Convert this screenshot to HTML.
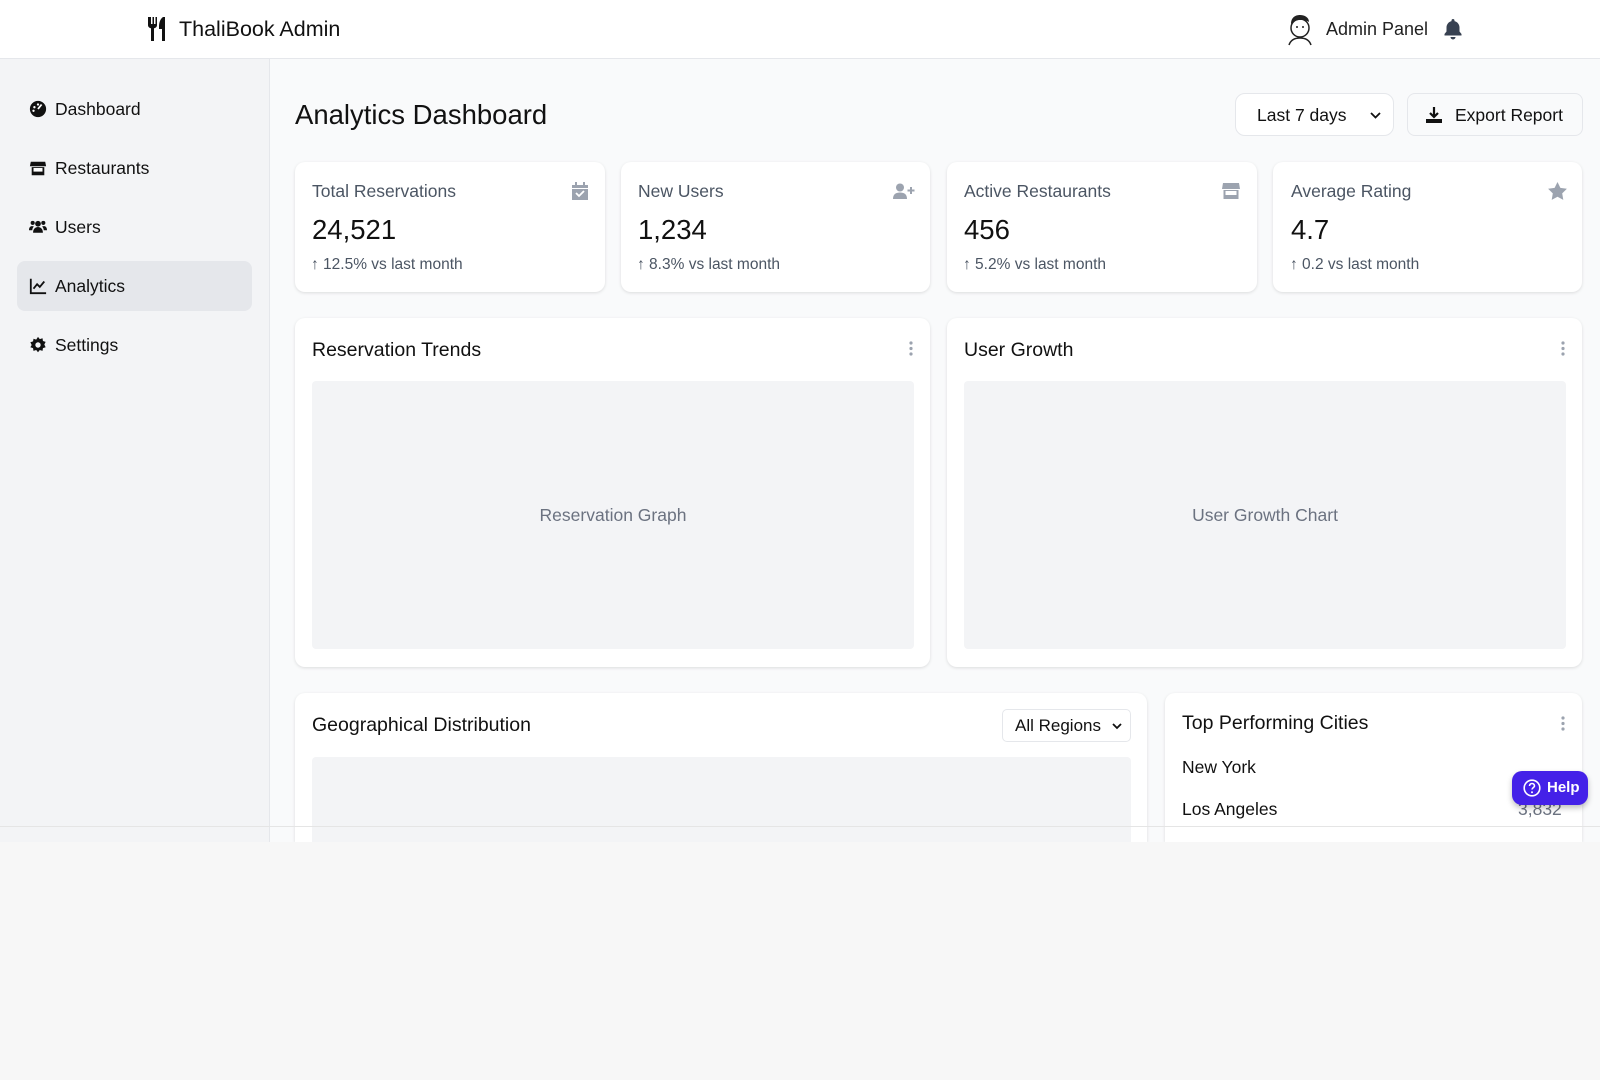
<!DOCTYPE html>
<html><head><meta charset="utf-8"><style>
*{box-sizing:border-box;margin:0;padding:0}
body{width:1600px;height:1080px;background:#f7f7f7;font-family:"Liberation Sans",sans-serif;color:#111;position:relative;overflow:hidden}
.a{position:absolute}
.hdr{left:0;top:0;width:1600px;height:59px;background:#fff;border-bottom:1px solid #e5e7eb}
.side{left:0;top:59px;width:270px;height:783px;background:#f3f4f6;border-right:1px solid #e5e7eb}
.main{left:270px;top:59px;width:1330px;height:783px;background:#f9fafb}
.nav{left:17px;width:235px;height:50px;display:flex;align-items:center;padding-left:12px;font-size:17.5px;color:#111;gap:8px;border-radius:8px}
.nav svg{width:18px;height:18px}
.card{background:#fff;border-radius:10px;box-shadow:0 1px 3px rgba(0,0,0,.12)}
.lbl{font-size:17.5px;color:#4b5563}
.val{font-size:27.5px;color:#111}
.sm{font-size:15.5px;color:#4b5563}
.ph{background:#f3f4f6;border-radius:4px;display:flex;align-items:center;justify-content:center;color:#6b7280;font-size:17.5px}
</style></head><body>
<div class="a hdr"></div>
<div class="a" style="left:147px;top:16px"><svg width="24" height="26" viewBox="0 0 24 26"><path d="M1 1v8c0 2 1.5 3 3 3.3V25h3V12.3C8.5 12 10 11 10 9V1H8.5v7H7V1H5.5v7H4V1z M16 1c-3 2-4 6-4 10v2h3v12h3V1z" fill="#111"/></svg></div>
<div class="a" style="left:179px;top:17px;font-size:21.5px">ThaliBook Admin</div>
<div class="a" style="left:1284px;top:12px"><svg width="32" height="34" viewBox="0 0 32 34"><circle cx="16" cy="16" r="9" fill="#fff" stroke="#222" stroke-width="1.5"/><path d="M7 12c0-7 5-9 9-9s9 2 9 7c-3-2-6-2-9-2-3 0-6 1-9 4z" fill="#222"/><path d="M5 33c2-6 7-7 11-7s9 1 11 7" fill="none" stroke="#222" stroke-width="1.5"/><circle cx="13" cy="15" r="1" fill="#222"/><circle cx="19" cy="15" r="1" fill="#222"/></svg></div>
<div class="a" style="left:1326px;top:19px;font-size:18px;color:#222">Admin Panel</div>
<div class="a" style="left:1443px;top:18px"><svg width="20" height="22" viewBox="0 0 20 22"><path d="M10 1c-1 0-1.5.7-1.5 1.5v.6C5.5 3.8 3.5 6.5 3.5 9.5v4L1.5 16v1.5h17V16l-2-2.5v-4c0-3-2-5.7-5-6.4v-.6C11.5 1.7 11 1 10 1zM7.5 19a2.5 2.5 0 005 0z" fill="#374151"/></svg></div>

<div class="a side"></div>
<div class="a main"></div>

<div class="a nav" style="top:84px"><svg viewBox="0 0 20 20"><circle cx="10" cy="10" r="9" fill="#111"/><path d="M10 10l4-5" stroke="#fff" stroke-width="2"/><circle cx="6" cy="8" r="1.3" fill="#fff"/><circle cx="10" cy="5" r="1.3" fill="#fff"/><circle cx="5" cy="12" r="1.3" fill="#fff"/></svg>Dashboard</div>
<div class="a nav" style="top:143px"><svg viewBox="0 0 20 20"><path d="M2 3h16l1 5H1zM3 9h14v9H3z" fill="#111"/><rect x="5" y="10" width="10" height="4" fill="#fff"/></svg>Restaurants</div>
<div class="a nav" style="top:202px"><svg viewBox="0 0 22 20"><circle cx="11" cy="6" r="3.5" fill="#111"/><circle cx="4.5" cy="5" r="2.5" fill="#111"/><circle cx="17.5" cy="5" r="2.5" fill="#111"/><path d="M5 17c0-5 3-7 6-7s6 2 6 7zM0 14c0-4 2-5 4-5 1 0 2 .5 2 .5-1.5 1-2 3-2 4.5zM22 14c0-4-2-5-4-5-1 0-2 .5-2 .5 1.5 1 2 3 2 4.5z" fill="#111"/></svg>Users</div>
<div class="a nav" style="top:261px;background:#e5e7eb"><svg viewBox="0 0 20 20"><path d="M2 2v16h17" fill="none" stroke="#111" stroke-width="2"/><path d="M5 13l4-5 3 3 5-6" fill="none" stroke="#111" stroke-width="2"/></svg>Analytics</div>
<div class="a nav" style="top:320px"><svg viewBox="0 0 20 20"><path d="M10 1l2 2.5 3-1 .5 3 3 1-1.5 3 1.5 3-3 1-.5 3-3-1-2 2.5-2-2.5-3 1-.5-3-3-1L3 10 1.5 7l3-1 .5-3 3 1z" fill="#111"/><circle cx="10" cy="10" r="3" fill="#f3f4f6"/></svg>Settings</div>

<div class="a" style="left:295px;top:99px;font-size:27.5px">Analytics Dashboard</div>
<div class="a card" style="left:1235px;top:93px;width:159px;height:43px;border:1px solid #e5e7eb;box-shadow:none;font-size:17.5px;padding:11px 0 0 21px">Last 7 days<svg class="a" style="right:12px;top:18px" width="11" height="8" viewBox="0 0 11 8"><path d="M1 1l4.5 4.5L10 1" fill="none" stroke="#111" stroke-width="1.8"/></svg></div>
<div class="a" style="left:1407px;top:93px;width:176px;height:43px;border:1px solid #e5e7eb;border-radius:8px;background:#f9fafb;font-size:17.5px;padding:11px 0 0 47px">Export Report<svg class="a" style="left:17px;top:12px" width="18" height="18" viewBox="0 0 18 18"><path d="M9 1v10M5 7l4 4 4-4" fill="none" stroke="#111" stroke-width="2.2"/><path d="M1 13h16v4H1z" fill="#111"/></svg></div>

<div class="a card" style="left:295px;top:162px;width:310px;height:130px"></div>
<div class="a card" style="left:621px;top:162px;width:309px;height:130px"></div>
<div class="a card" style="left:947px;top:162px;width:310px;height:130px"></div>
<div class="a card" style="left:1273px;top:162px;width:309px;height:130px"></div>

<div class="a lbl" style="left:312px;top:181px">Total Reservations</div>
<div class="a val" style="left:312px;top:214px">24,521</div>
<div class="a sm" style="left:311px;top:256px">↑ 12.5% vs last month</div>
<svg class="a" style="left:572px;top:182px" width="16" height="18" viewBox="0 0 16 18"><path d="M3 0h2v3H3zM11 0h2v3h-2zM0 3h16v15H0z" fill="#9ca3af"/><path d="M4 11l3 3 5-5" fill="none" stroke="#fff" stroke-width="1.8"/><rect y="6" width="16" height="1" fill="#fff"/></svg>

<div class="a lbl" style="left:638px;top:181px">New Users</div>
<div class="a val" style="left:638px;top:214px">1,234</div>
<div class="a sm" style="left:637px;top:256px">↑ 8.3% vs last month</div>
<svg class="a" style="left:893px;top:183px" width="22" height="16" viewBox="0 0 22 16"><circle cx="7" cy="4.5" r="4" fill="#9ca3af"/><path d="M0 16c0-5 3-6.5 7-6.5s7 1.5 7 6.5z" fill="#9ca3af"/><path d="M18 4v7M14.5 7.5h7" stroke="#9ca3af" stroke-width="2"/></svg>

<div class="a lbl" style="left:964px;top:181px">Active Restaurants</div>
<div class="a val" style="left:964px;top:214px">456</div>
<div class="a sm" style="left:963px;top:256px">↑ 5.2% vs last month</div>
<svg class="a" style="left:1222px;top:182px" width="18" height="18" viewBox="0 0 18 18"><path d="M1 1h16l1 6H0zM1.5 8h15v9h-15z" fill="#9ca3af"/><rect x="3.5" y="9" width="11" height="4" fill="#fff"/></svg>

<div class="a lbl" style="left:1291px;top:181px">Average Rating</div>
<div class="a val" style="left:1291px;top:214px">4.7</div>
<div class="a sm" style="left:1290px;top:256px">↑ 0.2 vs last month</div>
<svg class="a" style="left:1548px;top:182px" width="19" height="18" viewBox="0 0 24 23"><path d="M12 0l3.7 7.5 8.3 1.2-6 5.8 1.4 8.3L12 18.9 4.6 22.8 6 14.5 0 8.7l8.3-1.2z" fill="#9ca3af"/></svg>

<div class="a card" style="left:295px;top:318px;width:635px;height:349px"></div>
<div class="a card" style="left:947px;top:318px;width:635px;height:349px"></div>
<div class="a" style="left:312px;top:339px;font-size:19.5px">Reservation Trends</div>
<div class="a" style="left:964px;top:339px;font-size:19.5px">User Growth</div>
<svg class="a" style="left:909px;top:341px" width="4" height="15"><circle cx="2" cy="2" r="1.6" fill="#9ca3af"/><circle cx="2" cy="7.5" r="1.6" fill="#9ca3af"/><circle cx="2" cy="13" r="1.6" fill="#9ca3af"/></svg>
<svg class="a" style="left:1561px;top:341px" width="4" height="15"><circle cx="2" cy="2" r="1.6" fill="#9ca3af"/><circle cx="2" cy="7.5" r="1.6" fill="#9ca3af"/><circle cx="2" cy="13" r="1.6" fill="#9ca3af"/></svg>
<div class="a ph" style="left:312px;top:381px;width:602px;height:268px">Reservation Graph</div>
<div class="a ph" style="left:964px;top:381px;width:602px;height:268px">User Growth Chart</div>

<div class="a card" style="left:295px;top:693px;width:852px;height:149px;border-radius:10px 10px 0 0"></div>
<div class="a card" style="left:1165px;top:693px;width:417px;height:149px;border-radius:10px 10px 0 0"></div>
<div class="a" style="left:312px;top:714px;font-size:19.5px">Geographical Distribution</div>
<div class="a" style="left:1002px;top:709px;width:129px;height:33px;border:1px solid #e5e7eb;border-radius:5px;font-size:17px;padding:6px 0 0 12px">All Regions<svg class="a" style="right:8px;top:13px" width="10" height="7" viewBox="0 0 10 7"><path d="M1 1l4 4 4-4" fill="none" stroke="#111" stroke-width="1.8"/></svg></div>
<div class="a ph" style="left:312px;top:757px;width:819px;height:85px;border-radius:4px 4px 0 0"></div>
<div class="a" style="left:1182px;top:712px;font-size:19.5px">Top Performing Cities</div>
<svg class="a" style="left:1561px;top:716px" width="4" height="15"><circle cx="2" cy="2" r="1.6" fill="#9ca3af"/><circle cx="2" cy="7.5" r="1.6" fill="#9ca3af"/><circle cx="2" cy="13" r="1.6" fill="#9ca3af"/></svg>
<div class="a" style="left:1182px;top:757px;font-size:17.5px">New York</div>
<div class="a" style="left:1182px;top:799px;font-size:17.5px">Los Angeles</div>
<div class="a" style="left:1518px;top:799px;font-size:17.5px;color:#6b7280">3,832</div>
<div class="a" style="left:0;top:826px;width:1600px;height:1px;background:#e5e5e5"></div>
<div class="a" style="left:0;top:842px;width:1600px;height:238px;background:#f7f7f7"></div>
<div class="a" style="left:1512px;top:771px;width:76px;height:34px;background:#4421e8;border-radius:10px;box-shadow:0 3px 6px rgba(0,0,0,.25);color:#fff;font-size:15px;font-weight:bold;padding:8px 0 0 35px">Help<svg class="a" style="left:11px;top:8px" width="18" height="18" viewBox="0 0 18 18"><circle cx="9" cy="9" r="7.8" fill="none" stroke="#fff" stroke-width="1.6"/><path d="M6.5 7a2.5 2.5 0 115 0c0 1.5-2.5 1.8-2.5 3.5" fill="none" stroke="#fff" stroke-width="1.6"/><circle cx="9" cy="13.3" r="1" fill="#fff"/></svg></div>
</body></html>
